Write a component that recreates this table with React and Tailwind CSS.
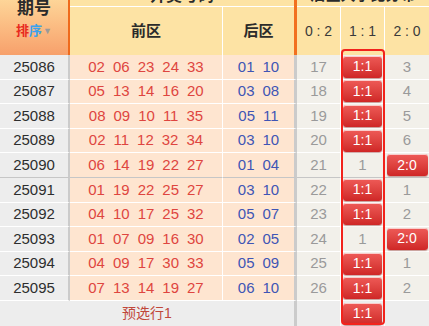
import React from 'react';

const rows = [
  { qi: '25086', front: ['02', '06', '23', '24', '33'], back: ['01', '10'], dist: ['17', 'hit', '3'] },
  { qi: '25087', front: ['05', '13', '14', '16', '20'], back: ['03', '08'], dist: ['18', 'hit', '4'] },
  { qi: '25088', front: ['08', '09', '10', '11', '35'], back: ['05', '11'], dist: ['19', 'hit', '5'] },
  { qi: '25089', front: ['02', '11', '12', '32', '34'], back: ['03', '10'], dist: ['20', 'hit', '6'] },
  { qi: '25090', front: ['06', '14', '19', '22', '27'], back: ['01', '04'], dist: ['21', '1', 'hit'], group: true },
  { qi: '25091', front: ['01', '19', '22', '25', '27'], back: ['03', '10'], dist: ['22', 'hit', '1'] },
  { qi: '25092', front: ['04', '10', '17', '25', '32'], back: ['05', '07'], dist: ['23', 'hit', '2'] },
  { qi: '25093', front: ['01', '07', '09', '16', '30'], back: ['02', '05'], dist: ['24', '1', 'hit'] },
  { qi: '25094', front: ['04', '09', '17', '30', '33'], back: ['05', '09'], dist: ['25', 'hit', '1'] },
  { qi: '25095', front: ['07', '13', '14', '19', '27'], back: ['06', '10'], dist: ['26', 'hit', '2'] },
];

const labels = ['0:2', '1:1', '2:0'];

const Badge = ({ text, wide }) => (
  <div className={`${wide ? 'w-[41px]' : 'w-[39px]'} h-[22px] shrink-0 rounded-[3px] bg-gradient-to-b from-[#ee5a57] to-[#cf2626] shadow-[inset_0_1px_0_rgba(255,255,255,0.7),0_1px_1px_rgba(120,0,0,0.35)] flex items-center justify-center text-white text-[14px]`}>
    {text}
  </div>
);

export default function App() {
  return (
    <div className="relative w-[429px] h-[326px] overflow-hidden bg-white font-['Liberation_Sans','Noto_Sans_CJK_SC',sans-serif]">
      <div className="-mt-[15px]">
        {/* HEADER */}
        <div className="flex">
          <div className="w-[70px] h-[70px] border-r-2 border-[#ef6a1c] bg-gradient-to-b from-[#fee3a4] to-[#f7a06b] flex flex-col items-center justify-center gap-[2px]">
            <div className="text-[17px] leading-[20px] font-bold text-[#2b2b2b]">期号</div>
            <div className="text-[13px] leading-[20px] font-bold flex items-center">
              <span className="text-[#e82a20]">排</span>
              <span className="text-[#3aa2ee]">序</span>
              <span className="text-[#9a9a9a] text-[9px] ml-[1px]">▼</span>
            </div>
          </div>
          <div className="w-[227px] border-r-[3px] border-[#f2701f] bg-[#fde3a4]">
            <div className="h-[22px] border-b border-white flex items-center justify-center text-[16px] font-bold text-[#2b2b2b]">开奖号码</div>
            <div className="flex h-[48px] text-[15px] font-bold text-[#2b2b2b]">
              <div className="w-[153px] border-r border-white flex items-center justify-center">前区</div>
              <div className="flex-1 flex items-center justify-center">后区</div>
            </div>
          </div>
          <div className="flex-1 bg-[#fde3a4]">
            <div className="h-[22px] border-b border-white flex items-center justify-center text-[15px] font-bold text-[#2b2b2b]">后区大小比分布</div>
            <div className="flex h-[48px] text-[14px] text-[#3a3a3a]">
              {labels.map((l, i) => (
                <div key={l} className={`${i < 2 ? 'w-[44px] border-r border-white' : 'flex-1'} flex items-center justify-center whitespace-pre`}>
                  {l.replace(':', ' : ')}
                </div>
              ))}
            </div>
          </div>
        </div>

        {/* ROWS */}
        {rows.map((r) => {
          const line = r.group ? 'border-b border-[#c6c6c6]' : 'border-b border-white';
          return (
            <div key={r.qi} className="flex h-[24.6px] text-[15px]">
              <div className={`w-[70px] border-r-2 border-r-[#cbcbcb] bg-[#ededed] ${line} flex items-center justify-center text-[#2e2e2e]`}>{r.qi}</div>
              <div className={`w-[153px] border-r border-r-white bg-[#fee5d0] ${line} flex items-center justify-center gap-[8px] text-[#de4540]`}>
                {r.front.map((n, i) => <span key={i}>{n}</span>)}
              </div>
              <div className={`w-[74px] border-r-[3px] border-r-[#cbcbcb] bg-[#fee5d0] ${line} flex items-center justify-center gap-[8px] text-[#3f55b5]`}>
                {r.back.map((n, i) => <span key={i}>{n}</span>)}
              </div>
              {r.dist.map((d, i) => (
                <div key={i} className={`${i < 2 ? 'w-[44px] border-r border-r-white' : 'flex-1'} bg-[#f2f0ea] ${line} flex items-center justify-center text-[#9a9a9a]`}>
                  {d === 'hit' ? <Badge text={labels[i]} wide={i === 2} /> : d}
                </div>
              ))}
            </div>
          );
        })}

        {/* PRESELECT ROW */}
        <div className="flex h-[26px] text-[15px] bg-[#ededed]">
          <div className="w-[297px] border-r-[3px] border-r-[#cbcbcb] flex items-center justify-center text-[14px] text-[#c0473a]">预选行1</div>
          <div className="w-[44px] border-r border-r-white" />
          <div className="w-[44px] border-r border-r-white flex items-center justify-center">
            <Badge text="1:1" />
          </div>
          <div className="flex-1" />
        </div>
      </div>

      {/* highlight around the 1:1 column */}
      <div className="absolute left-[341px] top-[49px] w-[44px] h-[276px] border-2 border-[#f2231c] rounded-[4px] pointer-events-none" />
    </div>
  );
}
